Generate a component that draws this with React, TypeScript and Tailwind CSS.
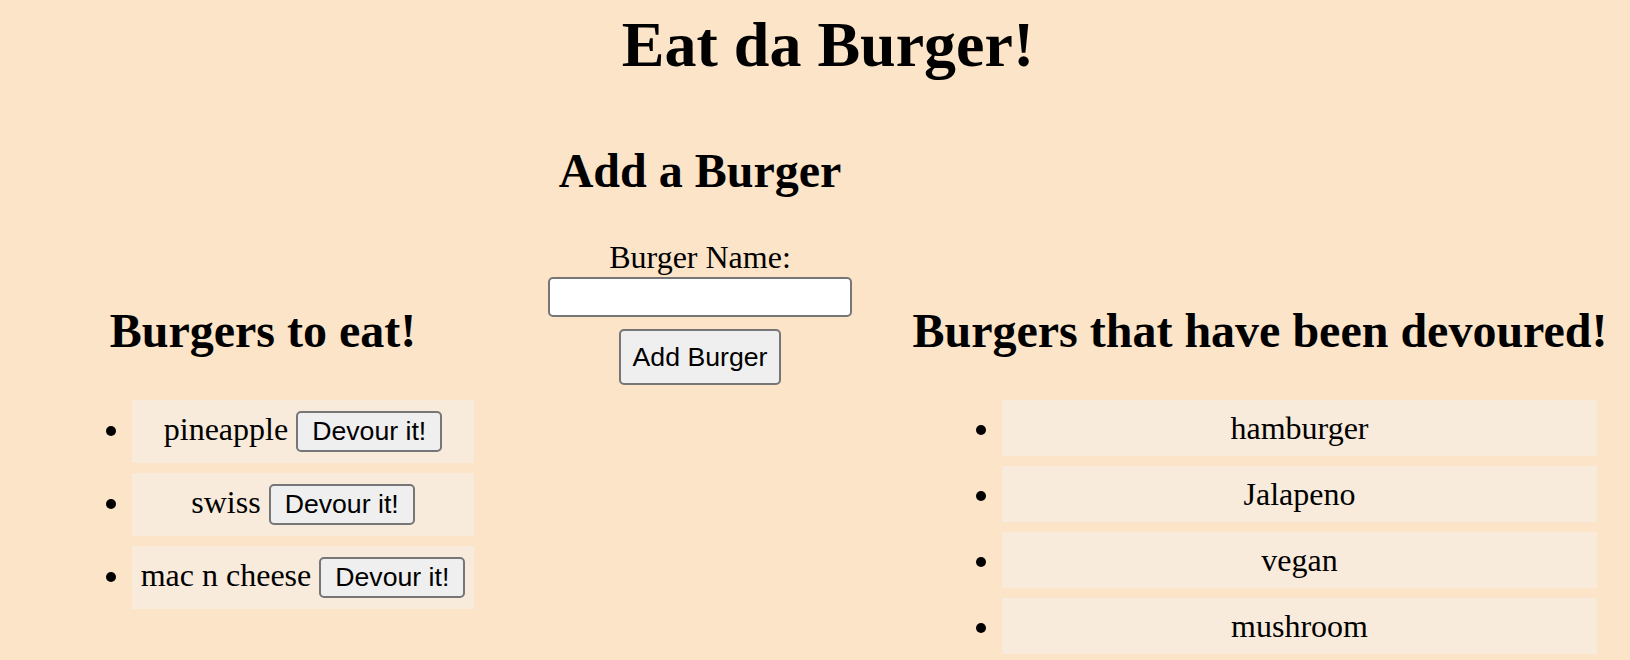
const toEat = ["pineapple", "swiss", "mac n cheese"];
const devoured = ["hamburger", "Jalapeno", "vegan", "mushroom"];

export default function App() {
  return (
    <div className="min-h-[660px] overflow-hidden bg-[#fce4c8] text-black font-['Liberation_Serif',serif]">
      <h1 className="mt-[8px] pl-[26px] text-center text-[64px] leading-[74px] font-bold">Eat da Burger!</h1>

      <div className="flex items-start">
        {/* to eat */}
        <div className="w-[526px] shrink-0 pt-[221px]">
          <h2 className="text-center text-[48px] leading-[55px] font-bold">Burgers to eat!</h2>
          <ul className="mt-[42px] mx-[52px] pl-[80px] list-disc">
            {toEat.map((b) => (
              <li key={b} className="mb-[10px] whitespace-nowrap bg-[#f8ebdb] px-[6px] py-[11px] text-center text-[32px] leading-[36px]">
                {b}{" "}
                <button className="rounded-[5px] border-2 border-[#767676] bg-[#efefef] px-[14px] py-[3px] font-['Liberation_Sans',sans-serif] text-[26.67px] leading-[normal]">
                  Devour it!
                </button>
              </li>
            ))}
          </ul>
        </div>

        {/* add form */}
        <div className="w-[348px] shrink-0 pt-[61px] text-center">
          <h2 className="text-[48px] leading-[55px] font-bold">Add a Burger</h2>
          <form className="mt-[41px] flex flex-col items-center" onSubmit={(e) => e.preventDefault()}>
            <label className="text-[32px] leading-[37px]">Burger Name:</label>
            <input type="text" className="mt-[1px] h-[40px] w-[304px] rounded-[5px] border-2 border-[#767676] bg-white" />
            <button className="mt-[12px] h-[56px] rounded-[5px] border-2 border-[#767676] bg-[#efefef] px-[12px] font-['Liberation_Sans',sans-serif] text-[26.67px] leading-[normal]">
              Add Burger
            </button>
          </form>
        </div>

        {/* devoured */}
        <div className="w-[772px] shrink-0 pt-[221px]">
          <h2 className="text-center text-[48px] leading-[55px] font-bold">Burgers that have been devoured!</h2>
          <ul className="mt-[42px] ml-[48px] mr-[49px] pl-[80px] list-disc">
            {devoured.map((b) => (
              <li key={b} className="mb-[10px] bg-[#f8ebdb] px-[10px] py-[10px] text-center text-[32px] leading-[36px]">
                {b}
              </li>
            ))}
          </ul>
        </div>
      </div>
    </div>
  );
}
